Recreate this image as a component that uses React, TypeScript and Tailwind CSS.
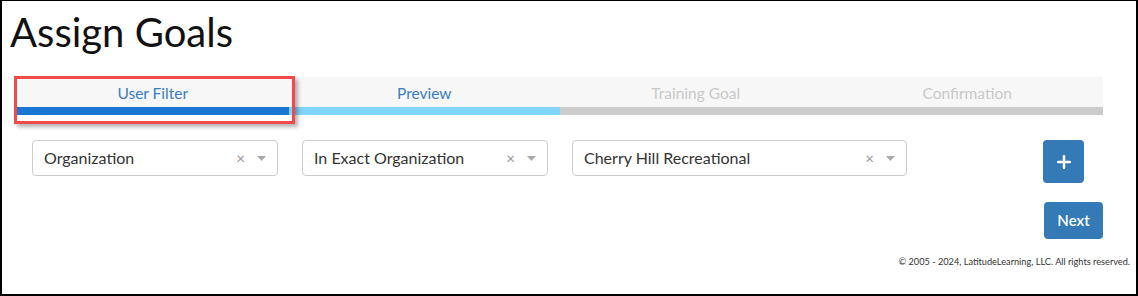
import React from "react";
import { Plus } from "lucide-react";

const steps = [
  { label: "User Filter", bar: "bg-[#1976d2]", text: "text-[#3b7cc0]" },
  { label: "Preview", bar: "bg-[#81d4fa]", text: "text-[#3b7cc0]" },
  { label: "Training Goal", bar: "bg-[#cccccc]", text: "text-[#c9c9c9]" },
  { label: "Confirmation", bar: "bg-[#cccccc]", text: "text-[#c9c9c9]" },
];

export default function App() {
  return (
    <div
      className="relative w-[1138px] h-[296px] bg-white border-black border-t border-x-2 border-b-2 overflow-hidden"
      style={{ fontFamily: "Lato, 'Noto Sans', sans-serif" }}
    >
      {/* Title */}
      <h1 className="pt-[7px] pl-[8px] text-[40px] leading-[48px] font-normal text-[#111]">Assign Goals</h1>

      {/* Stepper */}
      <div className="mt-[21px] ml-[15px] w-[1086px] grid grid-cols-4 bg-[#f7f7f7]">
        {steps.map((s) => (
          <div key={s.label} className="flex flex-col">
            <div className={`h-[30px] pt-[7px] text-center text-[15.5px] leading-[18px] ${s.text}`}>{s.label}</div>
            <div className={`h-[8px] ${s.bar}`} />
          </div>
        ))}
      </div>

      {/* Annotation highlight */}
      <div className="absolute left-[12px] top-[75px] w-[281px] h-[48px] border-[3px] border-[#f24a4a] shadow-[3px_3px_4px_rgba(0,0,0,0.3)]" />

      {/* Filter row */}
      <div className="mt-[25px] ml-[30px] flex items-start">
        <div className="flex gap-[24px]">
          <SelectBox value="Organization" width="w-[246px]" />
          <SelectBox value="In Exact Organization" width="w-[246px]" />
          <SelectBox value="Cherry Hill Recreational" width="w-[335px]" />
        </div>
        <button className="ml-[136px] w-[41px] h-[43px] rounded-[4px] bg-[#337ab7] flex items-center justify-center text-white">
          <Plus size={20} strokeWidth={3} />
        </button>
      </div>

      <div className="mt-[19px] pr-[33px] flex justify-end">
        <button className="w-[59px] h-[37px] rounded-[4px] bg-[#337ab7] text-white text-[15px] font-semibold">Next</button>
      </div>

      <div className="mt-[17px] pr-[6px] text-right text-[9.2px] leading-[12px] text-[#333]">
        © 2005 - 2024, LatitudeLearning, LLC. All rights reserved.
      </div>
    </div>
  );
}

function SelectBox({ value, width }: { value: string; width: string }) {
  return (
    <div className={`${width} h-[36px] border border-[#cccccc] rounded-[4px] flex items-center pl-[11px] pr-[11px]`}>
      <div className="flex-1 text-[16px] text-[#333] truncate">{value}</div>
      <span className="text-[#999] text-[15px] leading-none mr-[12px]">×</span>
      <svg width="9" height="5" viewBox="0 0 9 5">
        <path d="M0 0 L9 0 L4.5 5 Z" fill="#aaa" />
      </svg>
    </div>
  );
}
